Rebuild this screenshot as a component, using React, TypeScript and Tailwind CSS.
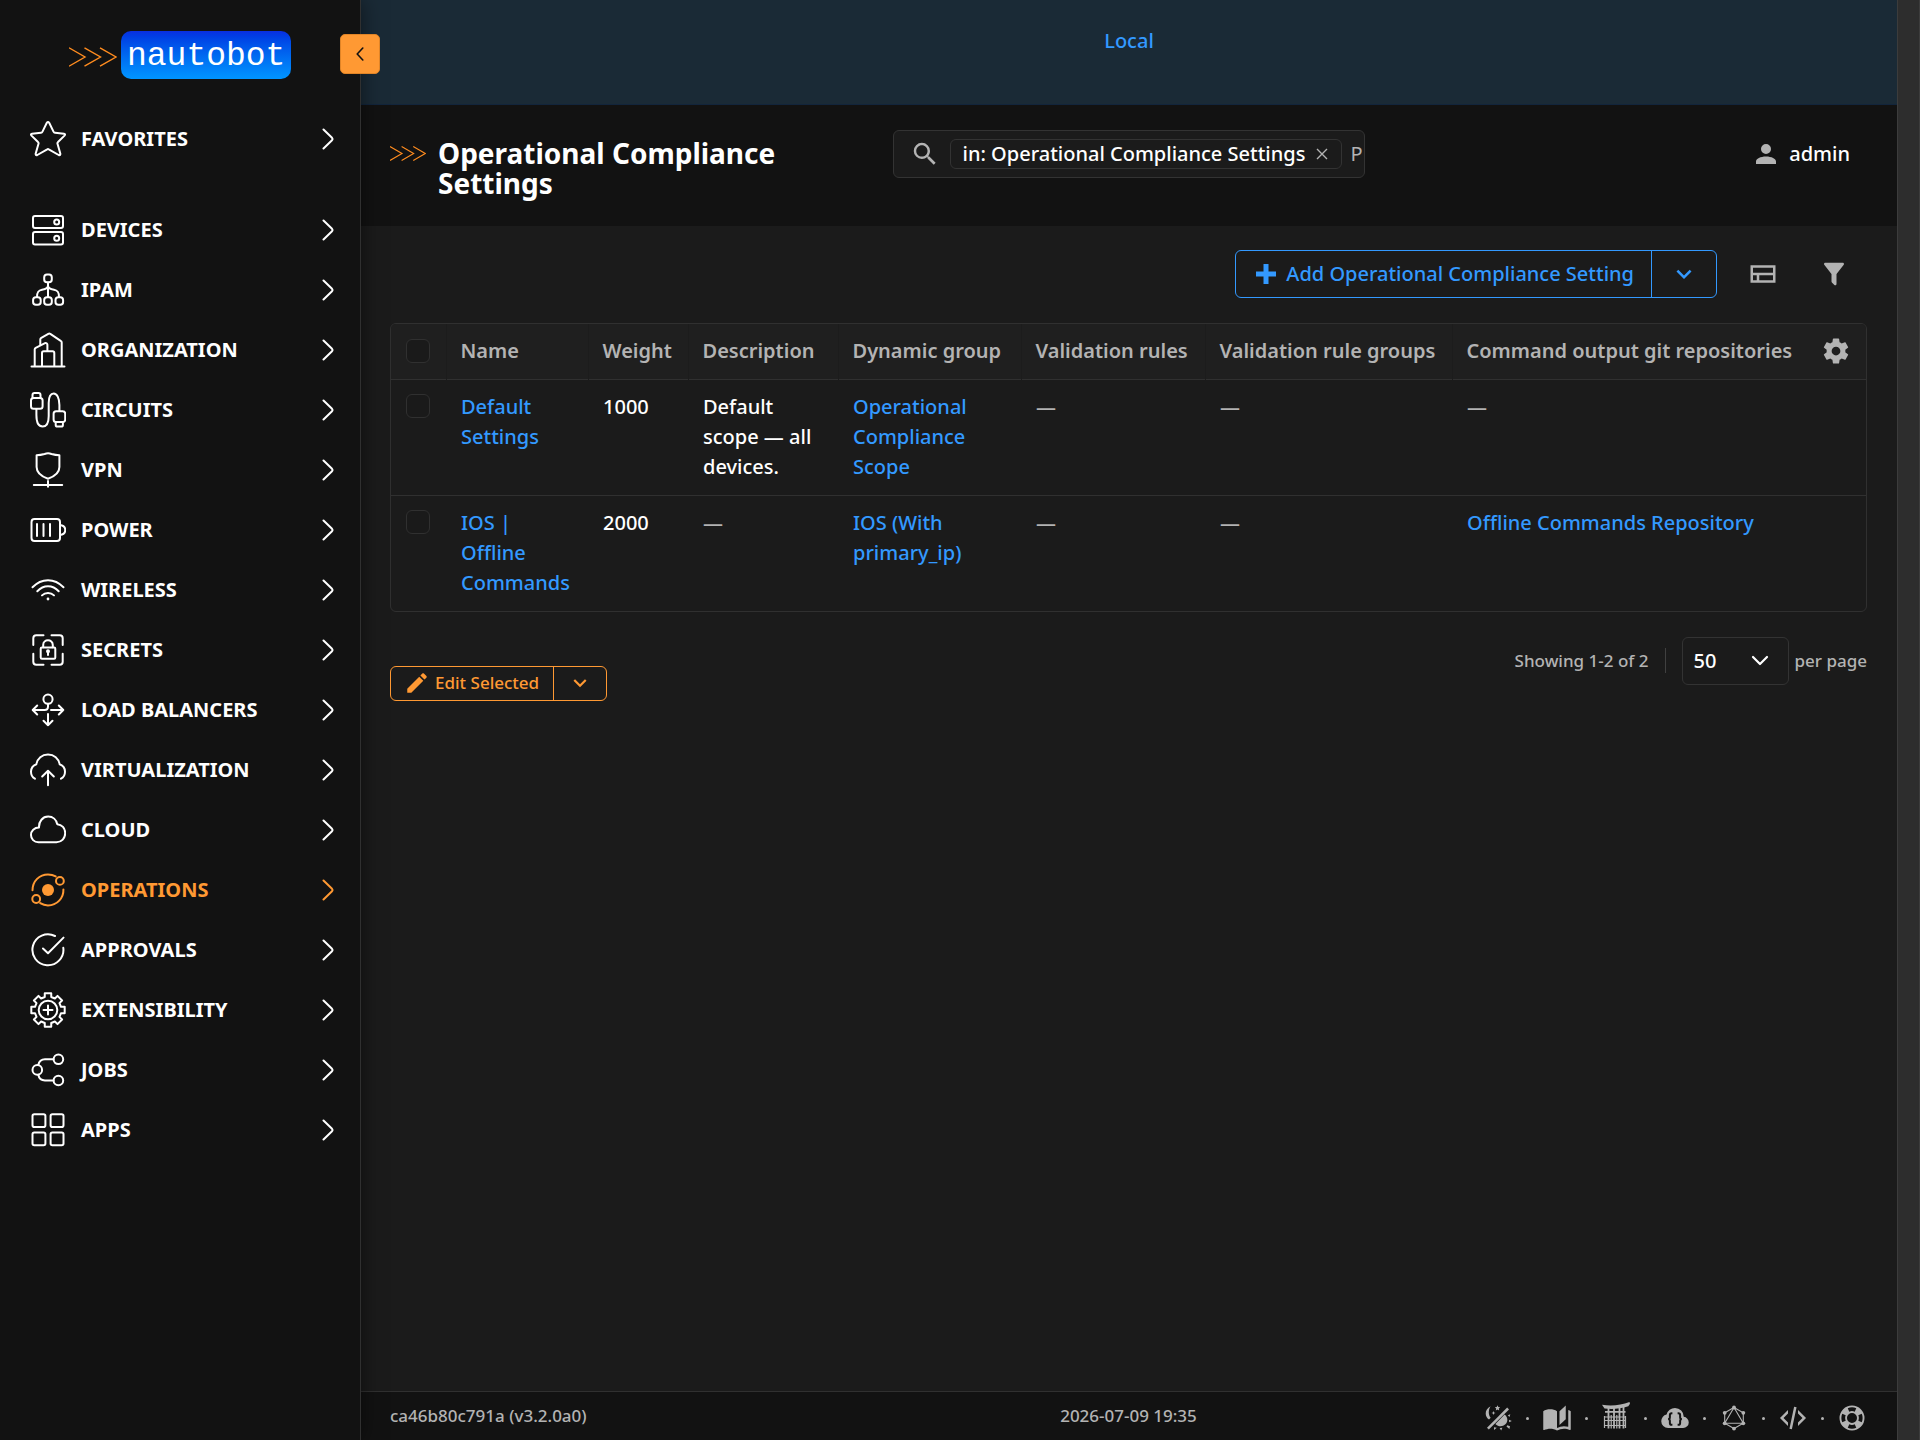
import React, { useState } from 'react';

const ICONS = {
    account: 'M12,4A4,4 0 0,1 16,8A4,4 0 0,1 12,12A4,4 0 0,1 8,8A4,4 0 0,1 12,4M12,14C16.42,14 20,15.79 20,18V20H4V18C4,15.79 7.58,14 12,14Z',
    book: 'M19 2L14 6.5V17.5L19 13V2M6.5 5C4.55 5 2.45 5.4 1 6.5V21.16C1 21.41 1.25 21.66 1.5 21.66C1.6 21.66 1.65 21.59 1.75 21.59C3.1 20.94 5.05 20.5 6.5 20.5C8.45 20.5 10.55 20.9 12 22C13.35 21.15 15.8 20.5 17.5 20.5C19.15 20.5 20.85 20.81 22.25 21.56C22.35 21.61 22.4 21.59 22.5 21.59C22.75 21.59 23 21.34 23 21.09V6.5C22.4 6.05 21.75 5.75 21 5.5V19C19.9 18.65 18.7 18.5 17.5 18.5C15.8 18.5 13.35 19.15 12 20V6.5C10.55 5.4 8.45 5 6.5 5Z',
    chevronDown: 'M7.41,8.58L12,13.17L16.59,8.58L18,10L12,16L6,10L7.41,8.58Z',
    cloud: 'M6.5 20Q4.22 20 2.61 18.43 1 16.85 1 14.58 1 12.63 2.17 11.1 3.35 9.57 5.25 9.15 5.88 6.85 7.75 5.43 9.63 4 12 4 14.93 4 16.96 6.04 19 8.07 19 11 20.73 11.2 21.86 12.5 23 13.78 23 15.5 23 17.38 21.69 18.69 20.38 20 18.5 20Z',
    cog: 'M12,15.5A3.5,3.5 0 0,1 8.5,12A3.5,3.5 0 0,1 12,8.5A3.5,3.5 0 0,1 15.5,12A3.5,3.5 0 0,1 12,15.5M19.43,12.97C19.47,12.65 19.5,12.33 19.5,12C19.5,11.67 19.47,11.34 19.43,11L21.54,9.37C21.73,9.22 21.78,8.95 21.66,8.73L19.66,5.27C19.54,5.05 19.27,4.96 19.05,5.05L16.56,6.05C16.04,5.66 15.5,5.32 14.87,5.07L14.5,2.42C14.46,2.18 14.25,2 14,2H10C9.75,2 9.54,2.18 9.5,2.42L9.13,5.07C8.5,5.32 7.96,5.66 7.44,6.05L4.95,5.05C4.73,4.96 4.46,5.05 4.34,5.27L2.34,8.73C2.21,8.95 2.27,9.22 2.46,9.37L4.57,11C4.53,11.34 4.5,11.67 4.5,12C4.5,12.33 4.53,12.65 4.57,12.97L2.46,14.63C2.27,14.78 2.21,15.05 2.34,15.27L4.34,18.73C4.46,18.95 4.73,19.03 4.95,18.95L7.44,17.94C7.96,18.34 8.5,18.68 9.13,18.93L9.5,21.58C9.54,21.82 9.75,22 10,22H14C14.25,22 14.46,21.82 14.5,21.58L14.87,18.93C15.5,18.67 16.04,18.34 16.56,17.94L19.05,18.95C19.27,19.03 19.54,18.95 19.66,18.73L21.66,15.27C21.78,15.05 21.73,14.78 21.54,14.63L19.43,12.97Z',
    filter: 'M14,12V19.88C14.04,20.18 13.94,20.5 13.71,20.71C13.32,21.1 12.69,21.1 12.3,20.71L10.29,18.7C10.06,18.47 9.96,18.16 10,17.87V12H9.97L4.21,4.62C3.87,4.19 3.95,3.56 4.38,3.22C4.57,3.08 4.78,3 5,3H19C19.22,3 19.43,3.08 19.62,3.22C20.05,3.56 20.13,4.19 19.79,4.62L14.03,12H14Z',
    lifebuoy: 'M19.79,15.41C20.74,13.24 20.74,10.75 19.79,8.59L17.05,9.83C17.65,11.21 17.65,12.78 17.06,14.17L19.79,15.41M15.42,4.21C13.25,3.26 10.76,3.26 8.59,4.21L9.83,6.94C11.22,6.35 12.79,6.35 14.18,6.95L15.42,4.21M4.21,8.58C3.26,10.76 3.26,13.24 4.21,15.42L6.95,14.17C6.35,12.79 6.35,11.21 6.95,9.82L4.21,8.58M8.59,19.79C10.76,20.74 13.25,20.74 15.42,19.78L14.18,17.05C12.8,17.65 11.22,17.65 9.84,17.06L8.59,19.79M12,2A10,10 0 0,1 22,12A10,10 0 0,1 12,22A10,10 0 0,1 2,12A10,10 0 0,1 12,2M12,8A4,4 0 0,0 8,12A4,4 0 0,0 12,16A4,4 0 0,0 16,12A4,4 0 0,0 12,8Z',
    magnify: 'M9.5,3A6.5,6.5 0 0,1 16,9.5C16,11.11 15.41,12.59 14.44,13.73L14.71,14H15.5L20.5,19L19,20.5L14,15.5V14.71L13.73,14.44C12.59,15.41 11.11,16 9.5,16A6.5,6.5 0 0,1 3,9.5A6.5,6.5 0 0,1 9.5,3M9.5,5C7,5 5,7 5,9.5C5,12 7,14 9.5,14C12,14 14,12 14,9.5C14,7 12,5 9.5,5Z',
    pencil: 'M20.71,7.04C21.1,6.65 21.1,6 20.71,5.63L18.37,3.29C18,2.9 17.35,2.9 16.96,3.29L15.12,5.12L18.87,8.87M3,17.25V21H6.75L17.81,9.93L14.06,6.18L3,17.25Z',
    plus: 'M20 14H14V20H10V14H4V10H10V4H14V10H20V14Z',
    viewLayout: 'M2 5V19H22V5H2M20 7V11H4V7H20M4 13H7V17H4V13M9 17V13H20V17H9Z',
    xml: 'M12.89,3L14.85,3.4L11.11,21L9.15,20.6L12.89,3M19.59,12L16,8.41V5.58L22.42,12L16,18.41V15.58L19.59,12M1.58,12L8,5.58V8.41L4.41,12L8,15.58V18.41L1.58,12Z',
};

const Icon: React.FC<{ name: keyof typeof ICONS; className?: string }> = ({ name, className = 'size-[30px]' }) => (
    <svg viewBox="0 0 24 24" fill="currentColor" className={`shrink-0 ${className}`} aria-hidden="true">
        <path d={ICONS[name]} />
    </svg>
);

// Outline of the eight-toothed gear used by "Extensibility"
const gearPoints = Array.from({ length: 8 }, (_, i) => {
    const at = (deg: number, r: number) => {
        const a = ((i * 45 + deg) * Math.PI) / 180;
        return `${(18 + r * Math.sin(a)).toFixed(2)},${(18 - r * Math.cos(a)).toFixed(2)}`;
    };
    return [at(-14, 13.4), at(-11, 17), at(11, 17), at(14, 13.4)].join(' ');
}).join(' ');

interface NavItem {
    label: string;
    active?: boolean;
    icon: React.ReactNode;
}

const NAV_ITEMS: NavItem[] = [
    {
        label: 'Devices',
        icon: <><rect x="3" y="4" width="30" height="12" rx="2" /><rect x="3" y="20" width="30" height="12.5" rx="2" /><circle cx="26.7" cy="10" r="2.5" /><circle cx="26.7" cy="26.3" r="2.5" /></>,
    },
    {
        label: 'IPAM',
        icon: <><rect x="14.2" y="2.6" width="7.6" height="7.6" rx="2.8" /><rect x="3.1" y="25.2" width="7.6" height="7.6" rx="2.8" /><rect x="14.2" y="25.2" width="7.6" height="7.6" rx="2.8" /><rect x="25.5" y="25.2" width="7.6" height="7.6" rx="2.8" /><path d="M18 10.5V25M7 25c0-5 1.5-6.600 5-7.200 4-.6 6-1.600 6-4.300 0 2.700 2 3.700 6 4.300 3.500.6 5 2.200 5 7.200" /></>,
    },
    {
        label: 'Organization',
        icon: <><path d="M1.500 34.400H34.500M31.700 34V10.500c0-.8-.3-1.300-1-1.700L20.300 1.900c-.7-.4-1.300-.4-2 0l-7 4c-.7.400-1 .9-1 1.700V12.800" /><path d="M4.700 34V17.500c0-.8.3-1.300 1-1.700l9.300-4.600c1.200-.5 2.400.2 2.400 1.500V19.300M12 34V21c0-1 .7-1.700 1.700-1.700h8.900c1 0 1.700.7 1.700 1.700V34" /></>,
    },
    {
        label: 'Circuits',
        icon: <><path d="M2.500 6V3c0-1.300.8-2 2-2h4c1.200 0 2 .7 2 2v3M25.700 30v3c0 1 .7 1.600 1.700 1.600h3.800c1 0 1.700-.6 1.700-1.600v-3" /><rect x="1" y="6" width="11.600" height="10.800" rx="2.500" /><rect x="23.600" y="19.200" width="11.600" height="10.800" rx="2.500" /><path d="M6.400 17v6c0 7.500 2.500 11.500 6.300 11.500s6-3.500 6-10.500V11c0-6 1.800-9.500 5-9.500s5.700 4.500 5.700 11.500v6" /></>,
    },
    {
        label: 'VPN',
        icon: <path d="M6.600 3.200c3 0 5.200-.4 8-1.200 2.300-.9 4.600-.9 6.900 0 2.700.8 5 1.200 7.900 1.200V15c0 5.500-5 9.500-11.400 11.700C11.600 24.500 6.600 20.500 6.600 15ZM18 29v5.700M3.800 33H32.200" />,
    },
    {
        label: 'Power',
        icon: <><rect x="1.500" y="7" width="28.500" height="22" rx="3" /><path d="M30 13c7 1 7 9 0 10M7 12v12M13.500 12v12M20 12v12" /></>,
    },
    {
        label: 'Wireless',
        icon: <><path d="M2.500 15.300C11.500 5.800 24.500 5.800 33.500 15.300M7.300 19.300C13.500 12.600 22.500 12.600 28.700 19.300M12 23.400C15.300 20.200 20.700 20.200 24 23.400" /><circle cx="18" cy="27" r="1.400" fill="currentColor" stroke="none" /></>,
    },
    {
        label: 'Secrets',
        icon: <><path d="M3.300 13V6.300a3 3 0 0 1 3-3H13.500M21.500 3.300H29.700a3 3 0 0 1 3 3V13M32.700 21.800V29.700a3 3 0 0 1-3 3H21.500M13.500 32.700H6.300a3 3 0 0 1-3-3V21.800" /><rect x="10.700" y="15.500" width="14.600" height="11.300" rx="1.200" /><path d="M13.200 15.300V13c0-6.200 9.600-6.200 9.600 0V15.300M18 19.500V23" /><circle cx="18" cy="19.300" r="1" fill="currentColor" /></>,
    },
    {
        label: 'Load Balancers',
        icon: <><circle cx="18" cy="7.200" r="4.600" /><path d="M18 12v2.500c0 2.400-1 3.500-3.500 3.500H2.800M7.200 13.500 2.700 18 7.200 22.500M21 18H33.300M28.800 13.500 33.300 18 28.800 22.500M18 22V33.200M13.500 28.700 18 33.200 22.500 28.700" /></>,
    },
    {
        label: 'Virtualization',
        icon: <path d="M4.900 26.700C2.300 25.300 1 22.800 1 19.700c0-3.400 2-6.200 5.300-7.500C7.400 6.500 11.900 2.500 18 2.500s10.600 4 11.700 9.700c3.300 1.300 5.300 4.100 5.300 7.500 0 3.100-1.400 5.600-4 7M18 33.300V19M12.200 24.500 18 18.800 23.800 24.500" />,
    },
    {
        label: 'Cloud',
        icon: <path d="M8.500 30.300C4 30.300 1 27 1 22.900s3.300-7.300 8-7.300C8.700 9.300 12.700 4.600 18.200 4.600c4.700 0 8.200 3 9 7.600 4.700.3 8 4 8 8.900 0 5.300-3.600 9.200-8.700 9.200Z" />,
    },
    {
        label: 'Operations',
        active: true,
        icon: <><circle cx="18" cy="18" r="6" fill="currentColor" stroke="none" /><path d="M2.500 18.300C2.500 9 9.500 2.500 18 2.500c3 0 5.400.6 7.700 1.900M33.400 17.400C33.800 26 27 33.400 18 33.400c-3 0-5.600-.9-7.800-2.300" /><circle cx="29.900" cy="8.900" r="3.900" /><circle cx="6.200" cy="27" r="3.900" /></>,
    },
    {
        label: 'Approvals',
        icon: <path d="M25 4A15.500 15.500 0 1 0 33.300 15.800M13 16.500 18 21.200 33.500 5.600" />,
    },
    {
        label: 'Extensibility',
        icon: <><polygon points={gearPoints} /><circle cx="18" cy="18" r="9.300" /><path d="M18 13.500V22.500M13.500 18H22.500" /></>,
    },
    {
        label: 'Jobs',
        icon: <><circle cx="28.400" cy="7.300" r="4.800" /><circle cx="28.400" cy="28.500" r="4.800" /><circle cx="7.300" cy="17.900" r="4.800" /><path d="M23.500 7.300H15c-3.500 0-6 2.200-6.700 5.700M23.500 28.500H15c-3.500 0-6-2.200-6.700-5.700" /></>,
    },
    {
        label: 'Apps',
        icon: <><rect x="2.500" y="2.200" width="12.900" height="12.900" rx="1.800" /><rect x="20.600" y="2.200" width="12.900" height="12.900" rx="1.800" /><rect x="2.500" y="20.400" width="12.900" height="12.900" rx="1.800" /><rect x="20.600" y="20.400" width="12.900" height="12.900" rx="1.800" /></>,
    },
];

const NavButton: React.FC<{ item: NavItem }> = ({ item }) => (
    <button
        type="button"
        className={`flex h-[60px] w-full items-center pl-[30px] pr-[26px] text-left text-xl font-bold uppercase ${item.active ? 'text-[#ff9933]' : 'text-white'}`}
    >
        <svg viewBox="0 0 36 36" className="size-9 shrink-0" fill="none" stroke="currentColor" strokeWidth="2" strokeLinecap="round" strokeLinejoin="round" aria-hidden="true">
            {item.icon}
        </svg>
        <span className="ml-[15px] flex-1 whitespace-nowrap">{item.label}</span>
        <svg viewBox="0 0 12 22" className="h-[22px] w-3" fill="none" stroke="currentColor" strokeWidth="2" strokeLinecap="round" strokeLinejoin="round" aria-hidden="true">
            <path d="M1.500 1.500 10 9.800Q11 11 10 12.200L1.500 20.500" />
        </svg>
    </button>
);

const Chevrons: React.FC<{ className: string; strokeWidth: number }> = ({ className, strokeWidth }) => (
    <svg viewBox="0 0 48 20" className={`shrink-0 ${className}`} fill="none" stroke="#ff8c1f" strokeWidth={strokeWidth} aria-hidden="true">
        <path d="M0 .8 16 10 0 19.200M15.500 .8 31.500 10 15.500 19.200M31 .8 47 10 31 19.200" />
    </svg>
);

const Sidebar: React.FC = () => (
    <aside className="relative z-10 w-[361px] shrink-0 border-r border-[#303030] bg-[#121212] shadow-[0_0_20px_rgba(0,0,0,0.5)]">
        <div className="flex h-[109px] items-center pl-[69px]">
            <a href="#" className="flex items-center gap-1" aria-label="nautobot home">
                <Chevrons className="mt-1 h-5 w-12" strokeWidth={1.4} />
                <span className="flex h-12 items-center rounded-[10px] bg-linear-to-b from-[#0a2ee0] to-[#0095ff] px-[6px] pt-1 font-['Liberation_Mono',monospace] text-[33px] leading-none text-white">
                    nautobot
                </span>
            </a>
        </div>
        <button
            type="button"
            aria-label="Collapse sidebar"
            className="absolute -right-5 top-[34px] flex size-10 items-center justify-center rounded-[5px] border border-[#e08427] bg-[#ff9933] text-[#121212]"
        >
            <svg viewBox="0 0 8 14" className="h-3.5 w-2" fill="none" stroke="currentColor" strokeWidth="1.600" strokeLinecap="round" strokeLinejoin="round" aria-hidden="true">
                <path d="M6.800 1 1.200 7 6.800 13" />
            </svg>
        </button>
        <nav>
            <NavButton
                item={{
                    label: 'Favorites',
                    icon: <path d="M16.700 2Q18 .2 19.300 2L23.500 10.600Q24 11.600 25 11.700L34 12.700Q35.900 13 34.500 14.600L28 21Q27.200 21.700 27.500 22.800L30.300 32.500Q30.600 34.700 28.700 34L18.800 28.300Q18 27.800 17.200 28.300L7.300 34Q5.400 34.700 5.700 32.500L8.500 22.800Q8.800 21.700 8 21L1.500 14.600Q.1 13 2 12.700L11 11.700Q12 11.600 12.500 10.600Z" />,
                }}
            />
            <ul className="mt-[31px]">
                {NAV_ITEMS.map((item) => (
                    <li key={item.label}><NavButton item={item} /></li>
                ))}
            </ul>
        </nav>
    </aside>
);

const PageHeader: React.FC = () => (
    <header className="grid grid-cols-[1fr_472px_1fr] items-start gap-x-[30px] bg-[#121212] pl-[29px] pr-[30px] pt-[25px] pb-7">
        <div className="mt-2 flex">
            <Chevrons className="mt-2 h-[15px] w-9" strokeWidth={1.5} />
            <h1 className="ml-3 text-[28px] font-bold leading-[30px] text-white">Operational Compliance Settings</h1>
        </div>
        <div className="flex h-12 items-center overflow-hidden rounded-[6px] border border-[#333333] bg-[#1b1b1b] pl-4 text-[#b3b3b3]">
            <Icon name="magnify" />
            <span className="ml-[10px] flex h-[30px] shrink-0 items-center rounded-[6px] border border-[#333333] pl-3 pr-[9px] text-xl font-medium text-white">
                in: Operational Compliance Settings
                <button type="button" aria-label="Remove filter" className="ml-[7px] text-[#b3b3b3]">
                    <svg viewBox="0 0 20 20" className="size-5" stroke="currentColor" strokeWidth="1.400" aria-hidden="true">
                        <path d="M5 5 15 15M15 5 5 15" />
                    </svg>
                </button>
            </span>
            <input
                type="text"
                aria-label="Search"
                placeholder="P"
                className="ml-2 w-3 flex-1 bg-transparent text-xl outline-none placeholder:text-[#b3b3b3]"
            />
        </div>
        <button type="button" className="flex h-12 items-center gap-2 justify-self-end pr-[17px] text-xl font-medium text-white">
            <Icon name="account" className="size-[30px] text-[#b3b3b3]" />
            admin
        </button>
    </header>
);

const Toolbar: React.FC = () => (
    <div className="flex justify-end text-xl text-[#b3b3b3]">
        <div className="mr-[13px] flex h-12 rounded-[6px] border border-[#3399ff] font-medium text-[#3399ff]">
            <button type="button" className="flex items-center gap-[5px] pl-[15px] pr-[17px]">
                <Icon name="plus" />
                Add Operational Compliance Setting
            </button>
            <button type="button" aria-label="More add options" className="flex w-[65px] items-center justify-center border-l border-[#3399ff]">
                <Icon name="chevronDown" />
            </button>
        </div>
        <button type="button" aria-label="Saved views" className="mr-[5px] flex h-12 w-[66px] items-center justify-center">
            <Icon name="viewLayout" />
        </button>
        <button type="button" aria-label="Filter" className="flex h-12 w-[66px] items-center justify-center">
            <Icon name="filter" />
        </button>
    </div>
);

interface Setting {
    name: string;
    weight: number;
    description?: string;
    dynamicGroup: string;
    gitRepository?: string;
}

const SETTINGS: Setting[] = [
    { name: 'Default Settings', weight: 1000, description: 'Default scope — all devices.', dynamicGroup: 'Operational Compliance Scope' },
    { name: 'IOS | Offline Commands', weight: 2000, dynamicGroup: 'IOS (With primary_ip)', gitRepository: 'Offline Commands Repository' },
];

const COLUMNS = ['Name', 'Weight', 'Description', 'Dynamic group', 'Validation rules', 'Validation rule groups', 'Command output git repositories'];

const Checkbox: React.FC<{ label: string }> = ({ label }) => (
    <input
        type="checkbox"
        aria-label={label}
        className="block size-6 appearance-none rounded-[6px] border border-[#303030] bg-[#1a1a1a] checked:bg-[#3399ff]"
    />
);

const Dash = () => <span className="text-[#b3b3b3]">—</span>;

const SettingsTable: React.FC = () => (
    <div className="mt-[25px] overflow-hidden rounded-[6px] border border-[#303030]">
        <table className="w-full table-fixed text-left text-xl leading-[30px] text-white">
            <colgroup>
                <col className="w-[55px]" />
                <col className="w-[142px]" />
                <col className="w-[100px]" />
                <col className="w-[150px]" />
                <col className="w-[183px]" />
                <col className="w-[184px]" />
                <col className="w-[247px]" />
                <col />
                <col className="w-[60px]" />
            </colgroup>
            <thead className="bg-[#1f1f1f] text-[#b3b3b3]">
                <tr className="h-[55px] border-b border-[#303030]">
                    <th className="pl-[15px]"><Checkbox label="Select all" /></th>
                    {COLUMNS.map((column) => (
                        <th key={column} className="whitespace-nowrap border-l border-[#1c1c1c] pl-[14px] font-semibold">{column}</th>
                    ))}
                    <th className="pl-[15px]">
                        <button type="button" aria-label="Configure table" className="block"><Icon name="cog" /></button>
                    </th>
                </tr>
            </thead>
            <tbody>
                {SETTINGS.map((row) => (
                    <tr key={row.name} className="border-b border-[#303030] align-top font-medium last:border-b-0">
                        <td className="py-[14px] pl-[15px]"><Checkbox label={`Select ${row.name}`} /></td>
                        <td className="px-[15px] pt-3 pb-[13px]"><a href="#" className="text-[#3399ff]">{row.name}</a></td>
                        <td className="px-[15px] pt-3 pb-[13px]">{row.weight}</td>
                        <td className="px-[15px] pt-3 pb-[13px]">{row.description ?? <Dash />}</td>
                        <td className="px-[15px] pt-3 pb-[13px]"><a href="#" className="text-[#3399ff]">{row.dynamicGroup}</a></td>
                        <td className="px-[15px] pt-3 pb-[13px]"><Dash /></td>
                        <td className="px-[15px] pt-3 pb-[13px]"><Dash /></td>
                        <td className="px-[15px] pt-3 pb-[13px]">
                            {row.gitRepository ? <a href="#" className="text-[#3399ff]">{row.gitRepository}</a> : <Dash />}
                        </td>
                        <td />
                    </tr>
                ))}
            </tbody>
        </table>
    </div>
);

const TableFooter: React.FC = () => {
    const [perPage, setPerPage] = useState('50');

    return (
        <div className="mt-[25px] flex items-start justify-between">
            <div className="mt-[29px] flex h-[35px] rounded-[6px] border border-[#ff9933] text-[17px] font-medium text-[#ff9933]">
                <button type="button" className="flex items-center gap-[5px] pl-[13px] pr-[14px]">
                    <Icon name="pencil" className="size-[26px]" />
                    Edit Selected
                </button>
                <button type="button" aria-label="More bulk actions" className="flex w-[53px] items-center justify-center border-l border-[#ff9933]">
                    <Icon name="chevronDown" className="size-[26px]" />
                </button>
            </div>
            <div className="flex items-center text-[17px] font-medium text-[#b3b3b3]">
                <span>Showing 1-2 of 2</span>
                <span className="mx-4 h-[25px] w-px bg-[#404040]" />
                <div className="relative">
                    <select
                        id="per-page"
                        value={perPage}
                        onChange={(e) => setPerPage(e.target.value)}
                        className="h-12 w-[107px] appearance-none rounded-[6px] border border-[#333333] bg-[#1b1b1b] pl-[11px] text-xl text-white"
                    >
                        <option>50</option>
                        <option>100</option>
                        <option>250</option>
                    </select>
                    <svg viewBox="0 0 18 11" className="pointer-events-none absolute right-5 top-[18px] h-[11px] w-[18px]" fill="none" stroke="white" strokeWidth="2.200" strokeLinecap="round" strokeLinejoin="round" aria-hidden="true">
                        <path d="M2 2 9 9 16 2" />
                    </svg>
                </div>
                <label htmlFor="per-page" className="ml-[6px]">per page</label>
            </div>
        </div>
    );
};

const FOOTER_LINKS: { label: string; icon: React.ReactNode }[] = [
    {
        label: 'Theme',
        icon: (
            <svg viewBox="0 0 30 30" className="size-[30px]" fill="currentColor" aria-hidden="true">
                <path d="M4 24.800 24.200 4.600 26 6.400 5.800 26.600Z" />
                <path d="M7.600 3.300C4.300 4.900 2.600 7.600 2.700 10.700c.1 2.500 1.300 4.500 3.300 5.700l1.700-1.700C5.400 12.500 5 7 7.600 3.300Z" />
                <path d="M14.500 2.300l.8 1.700 1.900.2-1.400 1.300.4 1.900-1.700-1-1.700 1 .4-1.900-1.400-1.300 1.900-.2ZM10.500 8l.6 1.400 1.400.6-1.400.6-.6 1.400-.6-1.400L8.500 10l1.400-.6Z" />
                <path d="M21.600 11.500c3.300 2.600 3.700 6.900.8 9.800-2.900 2.800-7.200 2.600-10-.4Z" />
                <path d="M24.800 12.200l2.500-.9-.8 2.800ZM26 16.800l2.800 1.200-2.600 1.200ZM24.300 22.200l2.700 1.100-.6 2.700-2.900-2.600ZM16.600 25l2.800-.2-1.200 2.800ZM11 24.200l2.800.6-2.800 2.300Z" />
            </svg>
        ),
    },
    { label: 'Documentation', icon: <Icon name="book" /> },
    {
        label: 'Live docs',
        icon: (
            <svg viewBox="0 0 30 30" className="size-[30px] overflow-visible" fill="none" stroke="currentColor" aria-hidden="true">
                <path d="M1 1.800C11 3.200 20 2.200 28.500-1L29 .8 27.300 3.200C19 6 11 6.400 3.500 5.500Z" fill="currentColor" stroke="none" />
                <path d="M4 8.900H24.500M7.500 5V25.500M13 5V25.500M18.500 5V25.500M22.500 4V25.500" strokeWidth="1.800" />
                <path d="M3 14H25M3 17.500H25M3 22.500H25M3.500 13V25M10.200 12V25.500M15.800 12V25.500M24.500 13V25" strokeWidth="1.200" />
            </svg>
        ),
    },
    {
        label: 'API',
        icon: (
            <svg viewBox="0 0 24 24" className="size-[30px]" fill="none" aria-hidden="true">
                <path d={ICONS.cloud} fill="currentColor" />
                <path d="M9.900 8.200H9.400c-1 0-1.500.5-1.500 1.500v1.600c0 .9-.5 1.500-1.400 1.500.9 0 1.400.6 1.400 1.500v1.600c0 1 .5 1.500 1.500 1.500h.5M14.100 8.200h.5c1 0 1.500.5 1.500 1.500v1.600c0 .9.500 1.500 1.400 1.500-.9 0-1.400.6-1.400 1.500v1.600c0 1-.5 1.500-1.500 1.500h-.5" stroke="#121212" strokeWidth="1.600" />
            </svg>
        ),
    },
    {
        label: 'GraphQL',
        icon: (
            <svg viewBox="0 0 30 30" className="size-[30px]" aria-hidden="true">
                <path d="M15 4.500 24.300 9.800V20.300L15 25.600 5.700 20.300V9.800ZM15 4.500 24.300 20.300H5.700Z" fill="none" stroke="currentColor" strokeWidth="1.100" />
                {[[15, 4.5], [24.3, 9.8], [24.3, 20.3], [15, 25.6], [5.7, 20.3], [5.7, 9.8]].map(([cx, cy]) => (
                    <circle key={`${cx}-${cy}`} cx={cx} cy={cy} r="1.900" fill="currentColor" />
                ))}
            </svg>
        ),
    },
    { label: 'Code', icon: <Icon name="xml" /> },
    { label: 'Help', icon: <Icon name="lifebuoy" /> },
];

const PageFooter: React.FC = () => (
    <footer className="grid grid-cols-[1fr_auto_1fr] items-start border-t border-[#303030] bg-[#121212] pl-[29px] pr-[30px] pt-[9px] pb-[7px] text-[17px] font-medium leading-[30px] text-[#b3b3b3]">
        <span>ca46b80c791a (v3.2.0a0)</span>
        <span>2026-07-09 19:35</span>
        <ul className="mt-[2px] flex justify-end">
            {FOOTER_LINKS.map((link, i) => (
                <li key={link.label} className="flex items-center">
                    {i > 0 && <span className="mx-[13px] size-[3px] rounded-full bg-[#b3b3b3]" />}
                    <a href="#" aria-label={link.label}>{link.icon}</a>
                </li>
            ))}
        </ul>
    </footer>
);

const App: React.FC = () => (
    <div className="flex min-h-screen bg-[#1b1b1b] font-['Noto_Sans',sans-serif]">
        <Sidebar />
        <div className="flex min-w-0 flex-1 flex-col">
            <div className="h-[105px] border-b border-[#12253c] bg-[#1a2a36] pt-[26px] text-center text-xl leading-[30px]">
                <a href="#" className="font-medium text-[#3399ff]">Local</a>
            </div>
            <PageHeader />
            <main className="flex-1 pl-[29px] pr-[30px] pt-6">
                <Toolbar />
                <SettingsTable />
                <TableFooter />
            </main>
            <PageFooter />
        </div>
        {/* Scroll track along the right edge */}
        <div className="w-[23px] shrink-0 border-x border-[#3c3c3c] bg-[#2d2d2d]" />
    </div>
);

export default App;
